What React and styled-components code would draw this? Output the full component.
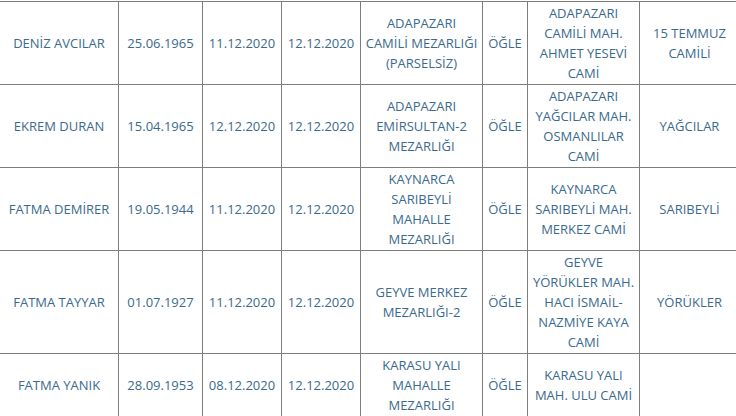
import React from "react";
import styled, { createGlobalStyle } from "styled-components";

const Global = createGlobalStyle`
  html, body { margin: 0; padding: 0; background: #ffffff; }
  body { font-family: "Open Sans", "Noto Sans", sans-serif; overflow: hidden; }
`;

const Table = styled.table`
  border-collapse: separate;
  border-spacing: 0;
  table-layout: fixed;
  margin-top: 1px;
  border-top: 1px solid #7d7d7d;
  width: 740px;
`;

const Cell = styled.td`
  box-sizing: border-box;
  border-right: 1px solid #7d7d7d;
  border-bottom: 1px solid #7d7d7d;
  padding: 1px 2px;
  text-align: center;
  vertical-align: middle;
  color: #3a6a8d;
  font-size: 13px;
  line-height: 20px;
  white-space: nowrap;
`;

const Line = styled.span`
  display: block;
`;

const widths = [119, 84, 79, 79, 122, 45, 112, 100];

const rows = [
  [
    ["DENİZ AVCILAR"], ["25.06.1965"], ["11.12.2020"], ["12.12.2020"],
    ["ADAPAZARI", "CAMİLİ MEZARLIĞI", "(PARSELSİZ)"], ["ÖĞLE"],
    ["ADAPAZARI", "CAMİLİ MAH.", "AHMET YESEVİ", "CAMİ"], ["15 TEMMUZ", "CAMİLİ"],
  ],
  [
    ["EKREM DURAN"], ["15.04.1965"], ["12.12.2020"], ["12.12.2020"],
    ["ADAPAZARI", "EMİRSULTAN-2", "MEZARLIĞI"], ["ÖĞLE"],
    ["ADAPAZARI", "YAĞCILAR MAH.", "OSMANLILAR", "CAMİ"], ["YAĞCILAR"],
  ],
  [
    ["FATMA DEMİRER"], ["19.05.1944"], ["11.12.2020"], ["12.12.2020"],
    ["KAYNARCA", "SARIBEYLİ", "MAHALLE", "MEZARLIĞI"], ["ÖĞLE"],
    ["KAYNARCA", "SARIBEYLİ MAH.", "MERKEZ CAMİ"], ["SARIBEYLİ"],
  ],
  [
    ["FATMA TAYYAR"], ["01.07.1927"], ["11.12.2020"], ["12.12.2020"],
    ["GEYVE MERKEZ", "MEZARLIĞI-2"], ["ÖĞLE"],
    ["GEYVE", "YÖRÜKLER MAH.", "HACI İSMAİL-", "NAZMİYE KAYA", "CAMİ"], ["YÖRÜKLER"],
  ],
  [
    ["FATMA YANIK"], ["28.09.1953"], ["08.12.2020"], ["12.12.2020"],
    ["KARASU YALI", "MAHALLE", "MEZARLIĞI"], ["ÖĞLE"],
    ["KARASU YALI", "MAH. ULU CAMİ"], [],
  ],
];

export default function App() {
  return (
    <>
      <Global />
      <Table>
        <colgroup>
          {widths.map((w, i) => (
            <col key={i} style={{ width: w }} />
          ))}
        </colgroup>
        <tbody>
          {rows.map((row, r) => (
            <tr key={r}>
              {row.map((lines, c) => (
                <Cell key={c}>
                  {lines.map((l, k) => (
                    <Line key={k}>{l}</Line>
                  ))}
                </Cell>
              ))}
            </tr>
          ))}
        </tbody>
      </Table>
    </>
  );
}
